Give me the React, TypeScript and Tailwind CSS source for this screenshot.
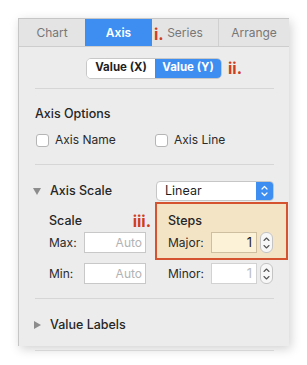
import React from "react";

const font = { fontFamily: "Inter, 'Liberation Sans', sans-serif" };

function Stepper() {
  return (
    <div className="ml-[3px] flex h-[21px] w-[13px] flex-col items-center justify-center rounded-[6px] border border-[#c4c4c4] bg-[#f7f7f7]">
      <svg width="7" height="16" viewBox="0 0 7 16" fill="none" stroke="#555" strokeWidth="1.1" strokeLinecap="round" strokeLinejoin="round">
        <path d="M1 5.5 L3.5 3 L6 5.5" />
        <path d="M1 10.5 L3.5 13 L6 10.5" />
      </svg>
    </div>
  );
}

function Checkbox({ label }: { label: string }) {
  return (
    <div className="flex items-center">
      <div className="h-[13px] w-[13px] rounded-[3px] border border-[#b5b5b5] bg-white" />
      <span className="ml-[6px] text-[12px] text-[#2a2a2a]">{label}</span>
    </div>
  );
}

export default function App() {
  return (
    <div className="h-[365px] w-[307px] bg-white pl-[18px] pt-[18px]" style={font}>
      <div className="relative h-[328px] w-[271px] border-l border-t border-[#c6c6c6] bg-[#ececec] shadow-[2px_3px_10px_rgba(0,0,0,0.18)]">
        {/* tabs */}
        <div className="flex h-[28px] border-b border-[#cdcdcd] bg-[#e4e4e4] text-[12px]">
          <div className="flex w-[66px] items-center justify-center text-[#777]">Chart</div>
          <div className="flex w-[67px] items-center justify-center bg-[#3d8ef0] font-semibold text-white">Axis</div>
          <div className="relative flex w-[67px] items-center justify-center border-r border-[#d0d0d0] text-[#777]">
            <span className="absolute left-[2px] top-[3px] text-[16px] font-bold text-[#cf3d20]">i.</span>
            Series
          </div>
          <div className="flex flex-1 items-center justify-center text-[#777]">Arrange</div>
        </div>

        {/* segmented */}
        <div className="mt-[9px] flex items-center pl-[67px]">
          <div className="flex h-[21px] w-[136px] overflow-hidden rounded-[5px] border border-[#c8c8c8] text-[11.5px] font-bold">
            <div className="flex w-[68px] items-center justify-center bg-white text-[#1f1f1f]">Value (X)</div>
            <div className="flex flex-1 items-center justify-center bg-[#3d8ef0] text-white">Value (Y)</div>
          </div>
          <span className="ml-[6px] text-[16px] font-bold text-[#cf3d20]">ii.</span>
        </div>

        <div className="pl-[16px] pr-[15px]">
          <div className="mt-[8px] h-px bg-[#d6d6d6]" />

          {/* Axis options */}
          <div className="mt-[17px] text-[12.5px] font-medium leading-[16px] text-[#262626]">Axis Options</div>
          <div className="mt-[9px] flex pl-px">
            <div className="w-[119px]">
              <Checkbox label="Axis Name" />
            </div>
            <Checkbox label="Axis Line" />
          </div>
          <div className="mt-[15px] h-px bg-[#d6d6d6]" />

          {/* Axis scale */}
          <div className="mt-[16px] flex h-[20px] items-center">
            <svg width="8" height="7" viewBox="0 0 8 7" className="ml-[-2px]">
              <path d="M0 0 L8 0 L4 7 Z" fill="#8c8c8c" />
            </svg>
            <span className="ml-[9px] text-[12.5px] font-medium text-[#262626]">Axis Scale</span>
            <div className="ml-auto flex h-[20px] w-[118px] overflow-hidden rounded-[4px] border border-[#c6c6c6] bg-white">
              <span className="flex-1 pl-[8px] text-[12.5px] leading-[18px] text-[#1f1f1f]">Linear</span>
              <div className="flex w-[17px] items-center justify-center bg-[#3d8ef0]">
                <svg width="7" height="14" viewBox="0 0 7 14" fill="none" stroke="white" strokeWidth="1.2" strokeLinecap="round" strokeLinejoin="round">
                  <path d="M1 5 L3.5 2.5 L6 5" />
                  <path d="M1 9 L3.5 11.5 L6 9" />
                </svg>
              </div>
            </div>
          </div>

          <div className="mt-px flex items-start">
            {/* left column */}
            <div className="w-[120px] shrink-0 pl-[14px] pt-[11px]">
              <div className="flex h-[16px] items-center justify-between pr-[4px]">
                <span className="text-[12.5px] font-medium text-[#262626]">Scale</span>
                <span className="text-[16px] font-bold text-[#cf3d20]">iii.</span>
              </div>
              <div className="mt-[3px] flex items-center">
                <span className="w-[35px] text-[12px] text-[#2a2a2a]">Max:</span>
                <div className="flex h-[21px] w-[62px] items-center justify-end border border-[#c8c8c8] bg-white pr-[3px] text-[12px] text-[#b3b3b3]">Auto</div>
              </div>
              <div className="mt-[10px] flex items-center">
                <span className="w-[35px] text-[12px] text-[#2a2a2a]">Min:</span>
                <div className="flex h-[21px] w-[62px] items-center justify-end border border-[#c8c8c8] bg-white pr-[3px] text-[12px] text-[#b3b3b3]">Auto</div>
              </div>
            </div>

            {/* right column */}
            <div className="w-[133px] shrink-0">
              <div className="h-[58px] border-2 border-[#d5532f] bg-[#f4e4c6] pl-[11px] pt-[9px]">
                <div className="h-[16px] text-[12.5px] font-medium leading-[16px] text-[#262626]">Steps</div>
                <div className="mt-[3px] flex items-center">
                  <span className="w-[43px] text-[12px] text-[#2a2a2a]">Major:</span>
                  <div className="flex h-[21px] w-[46px] items-center justify-end border border-[#cdbf9f] bg-[#fcf2d8] pr-[4px] text-[13px] text-[#1f1f1f]">1</div>
                  <Stepper />
                </div>
              </div>
              <div className="mt-[3px] flex items-center pl-[13px]">
                <span className="w-[43px] text-[12px] text-[#2a2a2a]">Minor:</span>
                <div className="flex h-[21px] w-[46px] items-center justify-end border border-[#d2d2d2] bg-white pr-[4px] text-[13px] text-[#bdbdbd]">1</div>
                <Stepper />
              </div>
            </div>
          </div>

          <div className="mt-[14px] h-px bg-[#d6d6d6]" />

          {/* Value labels */}
          <div className="mt-[18px] flex h-[16px] items-center">
            <svg width="7" height="8" viewBox="0 0 7 8" className="ml-[-1px]">
              <path d="M0 0 L7 4 L0 8 Z" fill="#8c8c8c" />
            </svg>
            <span className="ml-[9px] text-[12.5px] font-medium text-[#262626]">Value Labels</span>
          </div>
          <div className="mt-[17px] h-px bg-[#d6d6d6]" />
        </div>
      </div>
    </div>
  );
}
